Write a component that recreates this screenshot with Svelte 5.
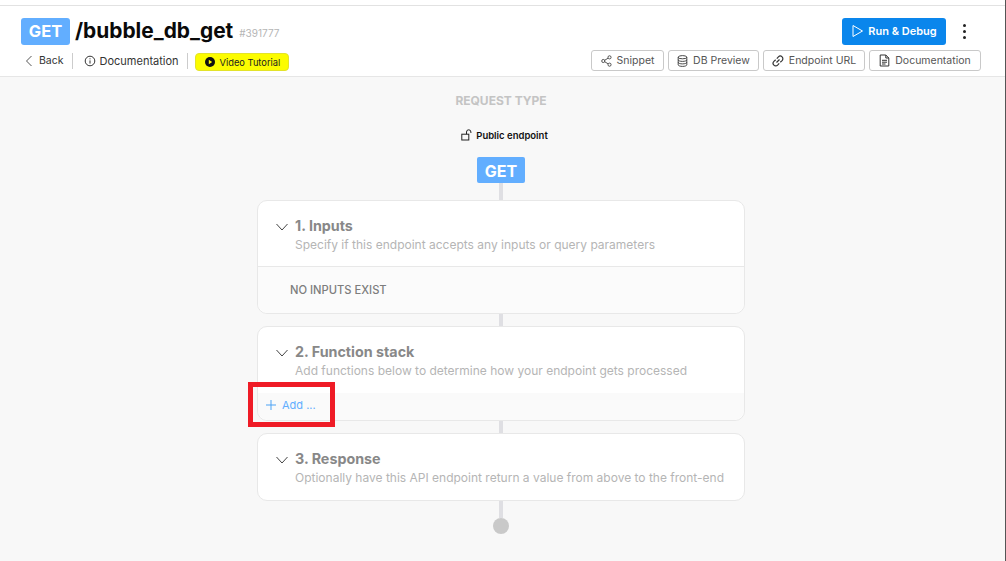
<script lang="ts">
  const tools = [
    { name: "Snippet", icon: "share" },
    { name: "DB Preview", icon: "db" },
    { name: "Endpoint URL", icon: "link" },
    { name: "Documentation", icon: "doc" }
  ];
</script>

<div class="page">
  <header class="header">
    <div class="row-top">
      <span class="method">GET</span>
      <h1 class="title">/bubble_db_get</h1>
      <span class="id">#391777</span>
      <button class="run">
        <svg width="13" height="14" viewBox="0 0 13 14" fill="none" stroke="#fff" stroke-width="1"><path d="M2 1.500v11l9.500-5.500z" stroke-linejoin="round"/></svg>
        Run &amp; Debug
      </button>
      <span class="more"><i></i><i></i><i></i></span>
    </div>
    <div class="row-sub">
      <a class="link back" href="#back">
        <svg width="10" height="12" viewBox="0 0 10 12" fill="none" stroke="#555" stroke-width="1"><path d="M7.500 1L2.500 6l5 5"/></svg>
        Back
      </a>
      <span class="sep first"></span>
      <a class="link docs" href="#docs">
        <svg width="12" height="12" viewBox="0 0 12 12" fill="none" stroke="#333" stroke-width="1"><circle cx="6" cy="6" r="4.800"/><path d="M6 5.400v3.200M6 3.300v1"/></svg>
        Documentation
      </a>
      <span class="sep"></span>
      <span class="video">
        <svg width="10" height="10" viewBox="0 0 10 10"><circle cx="5" cy="5" r="5" fill="#111"/><path d="M3.800 2.800v4.400L7.200 5z" fill="#ff0"/></svg>
        Video Tutorial
      </span>
      <div class="tools">
        {#each tools as t}
          <button class="tool">
            {#if t.icon === "share"}
              <svg width="11" height="12" viewBox="0 0 12 13" fill="none" stroke="#333" stroke-width="0.9"><circle cx="2.500" cy="6.500" r="1.700"/><circle cx="9.300" cy="2.500" r="1.700"/><circle cx="9.300" cy="10.500" r="1.700"/><path d="M4 5.700l3.800-2.300M4 7.300l3.800 2.300"/></svg>
            {:else if t.icon === "db"}
              <svg width="11" height="12" viewBox="0 0 11 12" fill="none" stroke="#333" stroke-width="0.9"><ellipse cx="5.500" cy="2.200" rx="4.300" ry="1.600"/><path d="M1.200 2.200v7.600c0 .9 1.900 1.600 4.300 1.600s4.300-.7 4.300-1.600V2.200M1.200 4.800c0 .9 1.900 1.600 4.300 1.600s4.300-.7 4.300-1.600M1.200 7.300c0 .9 1.900 1.600 4.300 1.600s4.300-.7 4.300-1.600"/></svg>
            {:else if t.icon === "link"}
              <svg width="12" height="12" viewBox="0 0 12 12" fill="none" stroke="#333" stroke-width="1.200"><path d="M4.500 7.500l3-3M4.800 3.700l1.600-1.800a2.300 2.300 0 0 1 3.700 3.700L8.300 7.200M7.200 8.300L5.600 10.100a2.300 2.300 0 0 1-3.700-3.700l1.800-1.600"/></svg>
            {:else}
              <svg width="11" height="13" viewBox="0 0 11 13" fill="none" stroke="#333" stroke-width="1"><path d="M1.200 1h5.600l3 3v8H1.200zM6.800 1v3h3M3 6.300h5M3 8.200h5M3 10h3.500"/></svg>
            {/if}
            {t.name}
          </button>
        {/each}
      </div>
    </div>
  </header>

  <main class="canvas">
    <h2 class="request">REQUEST TYPE</h2>
    <div class="public">
      <svg width="12" height="12" viewBox="0 0 12 12" fill="none" stroke="#222" stroke-width="1"><rect x="0.800" y="5.200" width="7" height="5.800"/><path d="M5.500 5.200V3a2.200 2.200 0 0 1 4.400 0v1"/></svg>
      Public endpoint
    </div>
    <div class="get">GET</div>
    <div class="line l1"></div>

    <section class="card">
      <div class="card-head">
        <svg class="chev" width="14" height="8" viewBox="0 0 14 8" fill="none" stroke="#444" stroke-width="1"><path d="M1.500 1l5.500 6 5.500-6"/></svg>
        <div>
          <h3>1. Inputs</h3>
          <p>Specify if this endpoint accepts any inputs or query parameters</p>
        </div>
      </div>
      <div class="empty">NO INPUTS EXIST</div>
    </section>
    <div class="line"></div>

    <section class="card">
      <div class="card-head stack">
        <svg class="chev" width="14" height="8" viewBox="0 0 14 8" fill="none" stroke="#444" stroke-width="1"><path d="M1.500 1l5.500 6 5.500-6"/></svg>
        <div>
          <h3>2. Function stack</h3>
          <p>Add functions below to determine how your endpoint gets processed</p>
        </div>
      </div>
      <div class="add">
        <svg width="10" height="10" viewBox="0 0 10 10" fill="none" stroke="#4da3f5" stroke-width="1"><path d="M5 0v10M0 5h10"/></svg>
        Add ...
      </div>
      <span class="highlight"></span>
    </section>
    <div class="line"></div>

    <section class="card">
      <div class="card-head stack">
        <svg class="chev" width="14" height="8" viewBox="0 0 14 8" fill="none" stroke="#444" stroke-width="1"><path d="M1.500 1l5.500 6 5.500-6"/></svg>
        <div>
          <h3>3. Response</h3>
          <p>Optionally have this API endpoint return a value from above to the front-end</p>
        </div>
      </div>
    </section>
    <div class="line end"></div>
    <div class="dot"></div>
  </main>
</div>

<style>
  :global(body) {
    margin: 0;
    font-family: Inter, "Liberation Sans", sans-serif;
  }

  .page {
    height: 561px;
    overflow: hidden;
    background: #f8f8f8;
    padding-top: 5px;
    box-sizing: border-box;
    position: relative;
    border-right: 1px solid #555;
    box-shadow: inset 0 5px 0 #fff;
  }

  .header {
    height: 72px;
    box-sizing: border-box;
    background: #fff;
    border-top: 1px solid #e2e2e2;
    border-bottom: 1px solid #e6e6e6;
    padding: 12px 24px 0 21px;
  }

  .row-top {
    display: flex;
    align-items: center;
    height: 27px;
  }

  .method {
    width: 49px;
    height: 26px;
    padding-bottom: 1px;
    display: flex;
    align-items: center;
    justify-content: center;
    background: #62aeff;
    color: #fff;
    font-size: 16.500px;
    font-weight: 700;
    border-radius: 3px;
  }

  .title {
    margin: 0 0 2px 5px;
    font-size: 20.900px;
    font-weight: 700;
    color: #0a0a0a;
  }

  .id {
    margin: 2px 0 0 6px;
    font-size: 10px;
    color: #b5b5b5;
  }

  .run {
    margin-left: auto;
    width: 104px;
    height: 27px;
    display: flex;
    align-items: center;
    justify-content: center;
    gap: 4px;
    border: 0;
    padding: 0 0 2px;
    background: #0a86ec;
    color: #fff;
    font: 600 11px Inter, sans-serif;
    border-radius: 3px;
  }

  .more {
    width: 3px;
    margin: 0 15px 0 17px;
    display: flex;
    flex-direction: column;
    gap: 3px;
  }

  .more i {
    width: 3px;
    height: 3px;
    border-radius: 50%;
    background: #222;
  }

  .row-sub {
    display: flex;
    align-items: center;
    height: 21px;
    margin-top: 5px;
  }

  .link {
    display: flex;
    align-items: center;
    color: #333;
    text-decoration: none;
    font-size: 11px;
  }

  .back {
    gap: 5px;
    margin-left: 3px;
    font-size: 10.500px;
  }

  .docs {
    gap: 4px;
  }

  .sep {
    width: 1px;
    height: 16px;
    background: #ccc;
    margin: 0 10px 0 8px;
  }

  .sep.first {
    margin-right: 11px;
  }

  .video {
    display: flex;
    align-items: center;
    gap: 5px;
    width: 94px;
    height: 18px;
    margin: 3px 0 0 -3px;
    box-sizing: border-box;
    padding-left: 9px;
    background: #fcfc00;
    border: 1px solid #e3e32a;
    border-radius: 4px;
    font-size: 9.300px;
    color: #222;
  }

  .tools {
    margin-left: auto;
    display: flex;
    gap: 4px;
  }

  .tool {
    height: 21px;
    display: flex;
    align-items: center;
    justify-content: center;
    gap: 5px;
    padding: 0;
    background: #fff;
    border: 1px solid #c9c9c9;
    border-radius: 3px;
    color: #555;
    font: 400 10.500px Inter, sans-serif;
  }

  .tool:nth-child(1) {
    width: 73px;
  }

  .tool:nth-child(2) {
    width: 91px;
  }

  .tool:nth-child(3) {
    width: 102px;
  }

  .tool:nth-child(4) {
    width: 112px;
  }

  .canvas {
    display: flex;
    flex-direction: column;
    align-items: center;
    padding: 17px 3px 0 0;
  }

  .request {
    margin: 0;
    font-size: 12px;
    line-height: 14px;
    font-weight: 700;
    color: #c4c4c4;
  }

  .public {
    display: flex;
    align-items: center;
    gap: 3px;
    margin: 20px 0 0 7px;
    height: 14px;
    font-size: 9.500px;
    font-weight: 600;
    color: #111;
  }

  .get {
    width: 48px;
    height: 26px;
    box-sizing: border-box;
    padding-top: 1px;
    margin-top: 15px;
    display: flex;
    align-items: center;
    justify-content: center;
    background: #62aeff;
    color: #fff;
    font-size: 16px;
    font-weight: 700;
    border-radius: 2px;
  }

  .line {
    width: 4px;
    height: 12px;
    background: #dfdfe3;
  }

  .l1 {
    height: 17px;
  }

  .end {
    height: 17px;
  }

  .card {
    width: 488px;
    box-sizing: border-box;
    position: relative;
    background: #fff;
    border: 1px solid #e8e8e8;
    border-radius: 10px;
  }

  .card-head {
    display: flex;
    padding: 16px 17px 14px;
    gap: 6px;
    height: 65px;
    box-sizing: border-box;
  }

  .card-head.stack {
    height: 66px;
  }

  .chev {
    margin-top: 6px;
    flex: none;
  }

  h3 {
    margin: 0;
    font-size: 14.300px;
    line-height: 17px;
    font-weight: 700;
    color: #888;
  }

  p {
    margin: 3px 0 0;
    font-size: 12px;
    line-height: 15px;
    color: #b5b5b5;
  }

  .empty {
    height: 47px;
    padding: 0 0 1px 32px;
    box-sizing: border-box;
    display: flex;
    align-items: center;
    border-top: 1px solid #e8e8e8;
    background: #fbfbfb;
    border-radius: 0 0 10px 10px;
    font-size: 11.200px;
    font-weight: 500;
    color: #7d7d7d;
  }

  .add {
    height: 27px;
    box-sizing: border-box;
    padding: 0 0 4px 8px;
    display: flex;
    align-items: center;
    gap: 6px;
    background: #fafafa;
    border-radius: 0 0 10px 10px;
    font-size: 11px;
    color: #62aeff;
  }

  .highlight {
    position: absolute;
    left: -10px;
    top: 55px;
    width: 87px;
    height: 45px;
    box-sizing: border-box;
    border: 5px solid #ef1b26;
  }

  .dot {
    width: 16px;
    height: 16px;
    border-radius: 50%;
    background: #c9c9c9;
  }
</style>
